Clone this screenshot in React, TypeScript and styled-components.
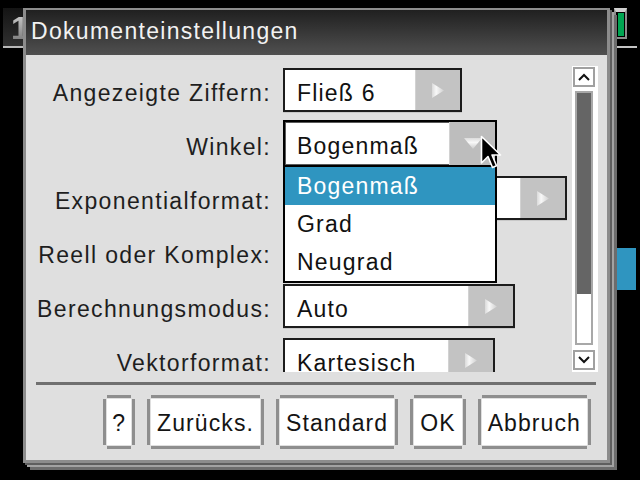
import React, { useId } from "react";
import styled, { createGlobalStyle } from "styled-components";

const Global = createGlobalStyle`
  html, body { margin: 0; padding: 0; background: #000; }
  * { box-sizing: border-box; }
`;

const FONT = `"Liberation Sans", Arial, sans-serif`;

const Screen = styled.div`
  position: relative;
  width: 640px;
  height: 480px;
  overflow: hidden;
  background: #000;
  padding: 8px 0 0 23px;
  font-family: ${FONT};
`;

const HomeTab = styled.div`
  position: absolute;
  left: 3px;
  top: 8px;
  width: 30px;
  height: 40px;
  padding: 4px 0 0 8px;
  background: linear-gradient(#141414, #303030);
  border-bottom: 2px solid #b8b8b8;
`;

const TabDigit = styled.span`
  font: bold 32px/32px ${FONT};
  background: linear-gradient(#d8d8d8, #6e6e6e);
  -webkit-background-clip: text;
  background-clip: text;
  color: transparent;
`;

const Battery = styled.div`
  position: absolute;
  left: 614px;
  top: 8px;
  width: 13px;
  height: 31px;
  border: 2px solid #8c8c8c;
  border-top: 4px solid #d0d0d0;
  background: #000;
  padding: 1px 1px 1px 2px;
`;

const BatteryFill = styled.div`
  width: 100%;
  height: 100%;
  background: #00a552;
`;

const TopRule = styled.div`
  position: absolute;
  left: 614px;
  top: 46px;
  width: 23px;
  height: 2px;
  background: #c4c4c4;
`;

const SideMarker = styled.div`
  position: absolute;
  left: 613px;
  top: 248px;
  width: 23px;
  height: 42px;
  background: #2f95c0;
`;

const Dialog = styled.div`
  position: relative;
  z-index: 1;
  width: 587px;
  height: 455px;
  border: 3px solid #8c8c8c;
  border-top-width: 2px;
  box-shadow: 2px 2px 0 #5e5e5e, 4px 4px 0 #a2a2a2, 7px 7px 0 #6c6c6c;
  display: flex;
  flex-direction: column;
`;

const TitleBar = styled.div`
  height: 45px;
  padding: 8px 0 0 5px;
  background: linear-gradient(#202020, #505050);
  color: #f2f2f2;
  font-size: 23px;
  line-height: 26px;
  letter-spacing: 1.3px;
  white-space: nowrap;
`;

const Body = styled.div`
  flex: 1;
  background: #dfdfdf;
  display: flex;
  flex-direction: column;
`;

const MainArea = styled.div`
  display: flex;
  height: 317px;
`;

const FormViewport = styled.div`
  flex: 1;
  overflow: hidden;
  padding-top: 13px;
`;

const FormGrid = styled.div`
  display: grid;
  grid-template-columns: 245px auto;
  column-gap: 12px;
  grid-auto-rows: 44px;
  row-gap: 10px;
  font-size: 23px;
  letter-spacing: 1.35px;
`;

const Label = styled.div`
  justify-self: end;
  align-self: center;
  padding-top: 6px;
  color: #1e1e1e;
  white-space: nowrap;
`;

const SelectBox = styled.div<{ $width: number; $focused?: boolean }>`
  position: ${(p) => (p.$focused ? "relative" : "static")};
  z-index: ${(p) => (p.$focused ? 2 : "auto")};
  align-self: start;
  width: ${(p) => p.$width}px;
  height: ${(p) => (p.$focused ? 47 : 44)}px;
  margin-top: ${(p) => (p.$focused ? -2 : 0)}px;
  display: flex;
  background: #fff;
  border: 2px solid ${(p) => (p.$focused ? "#000" : "#1c1c1c")};
  box-shadow: ${(p) =>
    p.$focused ? "inset 0 0 0 1px #5a5a5a" : "0 1px 0 #c8c8c8"};
`;

const SelectValue = styled.div`
  flex: 1;
  display: flex;
  align-items: center;
  padding: 6px 0 0 12px;
  color: #111;
  letter-spacing: 1.2px;
  white-space: nowrap;
  overflow: hidden;
`;

const SelectArrow = styled.div<{ $focused?: boolean }>`
  width: ${(p) => (p.$focused ? 46 : 45)}px;
  display: flex;
  align-items: center;
  justify-content: center;
  background: ${(p) => (p.$focused ? "#bdbdbd" : "#c3c3c3")};
  border-left: 1px solid #d2d2d2;
`;

const DropList = styled.div`
  position: absolute;
  z-index: 5;
  top: calc(100% + 2px);
  left: -2px;
  right: -2px;
  background: #fff;
  border: 2px solid #000;
  border-top: none;
`;

const DropItem = styled.div<{ $selected?: boolean }>`
  height: 38px;
  display: flex;
  align-items: center;
  padding: 1px 0 0 12px;
  letter-spacing: 1.2px;
  background: ${(p) => (p.$selected ? "#2f95c0" : "#fff")};
  color: ${(p) => (p.$selected ? "#fff" : "#111")};
`;

const Cursor = styled.svg`
  position: absolute;
  z-index: 6;
  left: 195px;
  top: 13px;
`;

const ScrollBar = styled.div`
  width: 26px;
  height: 306px;
  margin: 11px 9px 0 0;
  background: #fff;
  padding: 1px 3px 2px 1px;
  display: flex;
  flex-direction: column;
`;

const ScrollButton = styled.div`
  width: 22px;
  height: 20px;
  border: 2px solid #a0a0a0;
  background: #fff;
  display: flex;
  align-items: center;
  justify-content: center;
`;

const Track = styled.div`
  flex: 1;
  margin: 4px 2px 5px 2px;
  border: 2px solid #a8a8a8;
  background: #fff;
`;

const Thumb = styled.div`
  height: 201px;
  background: #656565;
`;

const Separator = styled.div`
  height: 3px;
  margin: 10px 11px 0 10px;
  background: #707070;
`;

const ButtonRow = styled.div`
  display: flex;
  justify-content: flex-end;
  gap: 12px;
  margin-top: 10px;
  padding-right: 16px;
`;

const bar = "linear-gradient(#8e8e8e, #8e8e8e)";

const DialogButton = styled.div<{ $compact?: boolean }>`
  height: 54px;
  padding: 3px ${(p) => (p.$compact ? 5 : 6)}px 0;
  display: flex;
  align-items: center;
  font-size: 23px;
  letter-spacing: 1.1px;
  color: #141414;
  white-space: nowrap;
  border: 4px solid transparent;
  background: ${bar} top / calc(100% - 8px) 3px no-repeat border-box,
    ${bar} bottom / calc(100% - 8px) 3px no-repeat border-box,
    ${bar} left / 3px calc(100% - 8px) no-repeat border-box,
    ${bar} right / 3px calc(100% - 8px) no-repeat border-box,
    #fff padding-box;
`;

function RightTriangle() {
  const id = useId().replace(/:/g, "");
  return (
    <svg width="12" height="15" viewBox="0 0 12 15">
      <defs>
        <linearGradient id={id} x1="0" x2="1" y1="0" y2="0">
          <stop offset="0" stopColor="#dadada" />
          <stop offset="0.35" stopColor="#f8f8f8" />
          <stop offset="1" stopColor="#d0d0d0" />
        </linearGradient>
      </defs>
      <polygon points="0,0 12,7.5 0,15" fill={`url(#${id})`} />
    </svg>
  );
}

function DownTriangle() {
  const id = useId().replace(/:/g, "");
  return (
    <svg width="18" height="11" viewBox="0 0 18 11">
      <defs>
        <linearGradient id={id} x1="0" x2="0" y1="0" y2="1">
          <stop offset="0" stopColor="#dcdcdc" />
          <stop offset="0.4" stopColor="#f8f8f8" />
          <stop offset="1" stopColor="#cacaca" />
        </linearGradient>
      </defs>
      <polygon points="0,0 18,0 9,11" fill={`url(#${id})`} />
    </svg>
  );
}

const rows = [
  { label: "Angezeigte Ziffern:", value: "Fließ 6", width: 179 },
  { label: "Winkel:", value: "Bogenmaß", width: 214, open: true },
  { label: "Exponentialformat:", value: "", width: 284 },
  { label: "Reell oder Komplex:", value: "", width: 212 },
  { label: "Berechnungsmodus:", value: "Auto", width: 232 },
  { label: "Vektorformat:", value: "Kartesisch", width: 212 },
];

const options = ["Bogenmaß", "Grad", "Neugrad"];

export default function App() {
  return (
    <>
      <Global />
      <Screen>
        <HomeTab>
          <TabDigit>1</TabDigit>
        </HomeTab>
        <Battery>
          <BatteryFill />
        </Battery>
        <TopRule />
        <SideMarker />
        <Dialog>
          <TitleBar>Dokumenteinstellungen</TitleBar>
          <Body>
            <MainArea>
              <FormViewport>
                <FormGrid>
                  {rows.map((r) => (
                    <React.Fragment key={r.label}>
                      <Label>{r.label}</Label>
                      <SelectBox $width={r.width} $focused={r.open}>
                        <SelectValue>{r.value}</SelectValue>
                        <SelectArrow $focused={r.open}>
                          {r.open ? <DownTriangle /> : <RightTriangle />}
                        </SelectArrow>
                        {r.open && (
                          <>
                            <DropList>
                              {options.map((o) => (
                                <DropItem key={o} $selected={o === r.value}>
                                  {o}
                                </DropItem>
                              ))}
                            </DropList>
                            <Cursor width="22" height="36" viewBox="0 0 22 36">
                              <path
                                d="M1.5 1.5 L1.5 28 L8 21.5 L12.5 32.5 L16.5 30.8 L12 20 L20.5 20 Z"
                                fill="#000"
                                stroke="#fff"
                                strokeWidth="1.6"
                                strokeLinejoin="round"
                              />
                            </Cursor>
                          </>
                        )}
                      </SelectBox>
                    </React.Fragment>
                  ))}
                </FormGrid>
              </FormViewport>
              <ScrollBar>
                <ScrollButton>
                  <svg width="12" height="8" viewBox="0 0 12 8">
                    <path d="M1 7 L6 2 L11 7" fill="none" stroke="#111" strokeWidth="2" />
                  </svg>
                </ScrollButton>
                <Track>
                  <Thumb />
                </Track>
                <ScrollButton>
                  <svg width="12" height="8" viewBox="0 0 12 8">
                    <path d="M1 1 L6 6 L11 1" fill="none" stroke="#111" strokeWidth="2" />
                  </svg>
                </ScrollButton>
              </ScrollBar>
            </MainArea>
            <Separator />
            <ButtonRow>
              <DialogButton $compact>?</DialogButton>
              <DialogButton>Zurücks.</DialogButton>
              <DialogButton>Standard</DialogButton>
              <DialogButton>OK</DialogButton>
              <DialogButton>Abbruch</DialogButton>
            </ButtonRow>
          </Body>
        </Dialog>
      </Screen>
    </>
  );
}
